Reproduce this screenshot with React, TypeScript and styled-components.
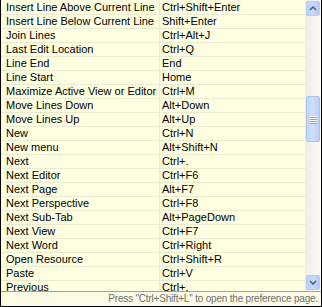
import styled, { createGlobalStyle } from "styled-components";

const GlobalStyle = createGlobalStyle`
  html, body {
    margin: 0;
    padding: 0;
    background: #ffffff;
  }
  * {
    box-sizing: border-box;
  }
`;

const Frame = styled.div`
  width: 322px;
  height: 307px;
  display: flex;
  flex-direction: column;
  border-left: 1px solid #000;
  border-right: 1px solid #000;
  border-bottom: 1px solid #000;
  background: #ffffe1;
  font-family: "Liberation Sans", Arial, sans-serif;
  font-size: 11px;
  color: #000;
  overflow: hidden;
`;

const ListArea = styled.div`
  height: 291px;
  display: flex;
`;

const Table = styled.div`
  flex: 1;
  overflow: hidden;
  padding-top: 1px;
`;

const Row = styled.div`
  display: grid;
  grid-template-columns: 159px 1fr;
  height: 14px;
  border-bottom: 1px solid #ebebd2;
`;

const Cell = styled.div<{ $divider?: boolean }>`
  line-height: 13px;
  padding-left: ${(p) => (p.$divider ? "5px" : "2px")};
  white-space: nowrap;
  overflow: hidden;
  border-right: ${(p) => (p.$divider ? "1px solid #ebebd2" : "none")};
`;

const ScrollBar = styled.div`
  width: 16px;
  display: flex;
  flex-direction: column;
  padding: 1px;
  background: linear-gradient(to right, #eeede5, #fbfbf9);
`;

const ArrowButton = styled.div`
  width: 14px;
  height: 15px;
  border: 1px solid #b9cbf3;
  border-radius: 2px;
  background: linear-gradient(to right, #bcd0fb, #c9d8fc 50%, #b5c8f7);
  display: flex;
  align-items: center;
  justify-content: center;
`;

const Track = styled.div`
  flex: 1;
`;

const Thumb = styled.div<{ $top: number; $height: number }>`
  margin-top: ${(p) => p.$top}px;
  width: 14px;
  height: ${(p) => p.$height}px;
  border: 1px solid #aec2f2;
  border-radius: 2px;
  background: linear-gradient(to right, #c4d5fc, #cfddfd 50%, #bccffa);
  display: flex;
  flex-direction: column;
  align-items: center;
  justify-content: center;
  gap: 1px;
`;

const Grip = styled.div`
  width: 7px;
  height: 1px;
  background: #eef3fe;
  box-shadow: 0 1px 0 #8faaf0;
`;

const StatusBar = styled.div`
  flex: 1;
  border-top: 1px solid #a0a0a0;
  background: #fcfce6;
  color: #6f6f6f;
  font-size: 10px;
  letter-spacing: -0.2px;
  text-align: right;
  padding-right: 3px;
  line-height: 13px;
  white-space: nowrap;
`;

const rows: [string, string][] = [
  ["Insert Line Above Current Line", "Ctrl+Shift+Enter"],
  ["Insert Line Below Current Line", "Shift+Enter"],
  ["Join Lines", "Ctrl+Alt+J"],
  ["Last Edit Location", "Ctrl+Q"],
  ["Line End", "End"],
  ["Line Start", "Home"],
  ["Maximize Active View or Editor", "Ctrl+M"],
  ["Move Lines Down", "Alt+Down"],
  ["Move Lines Up", "Alt+Up"],
  ["New", "Ctrl+N"],
  ["New menu", "Alt+Shift+N"],
  ["Next", "Ctrl+."],
  ["Next Editor", "Ctrl+F6"],
  ["Next Page", "Alt+F7"],
  ["Next Perspective", "Ctrl+F8"],
  ["Next Sub-Tab", "Alt+PageDown"],
  ["Next View", "Ctrl+F7"],
  ["Next Word", "Ctrl+Right"],
  ["Open Resource", "Ctrl+Shift+R"],
  ["Paste", "Ctrl+V"],
  ["Previous", "Ctrl+,"],
];

const Chevron = ({ down }: { down?: boolean }) => (
  <svg width="8" height="5" viewBox="0 0 8 5">
    <path
      d={down ? "M1 1 L4 4 L7 1" : "M1 4 L4 1 L7 4"}
      fill="none"
      stroke="#4d6185"
      strokeWidth="1.6"
    />
  </svg>
);

const App = () => {
  return (
    <>
      <GlobalStyle />
      <Frame>
        <ListArea>
          <Table>
            {rows.map(([command, keys]) => (
              <Row key={command}>
                <Cell $divider>{command}</Cell>
                <Cell>{keys}</Cell>
              </Row>
            ))}
          </Table>
          <ScrollBar>
            <ArrowButton>
              <Chevron />
            </ArrowButton>
            <Track>
              <Thumb $top={80} $height={46}>
                <Grip />
                <Grip />
                <Grip />
                <Grip />
              </Thumb>
            </Track>
            <ArrowButton>
              <Chevron down />
            </ArrowButton>
          </ScrollBar>
        </ListArea>
        <StatusBar>Press "Ctrl+Shift+L" to open the preference page.</StatusBar>
      </Frame>
    </>
  );
};

export default App;
